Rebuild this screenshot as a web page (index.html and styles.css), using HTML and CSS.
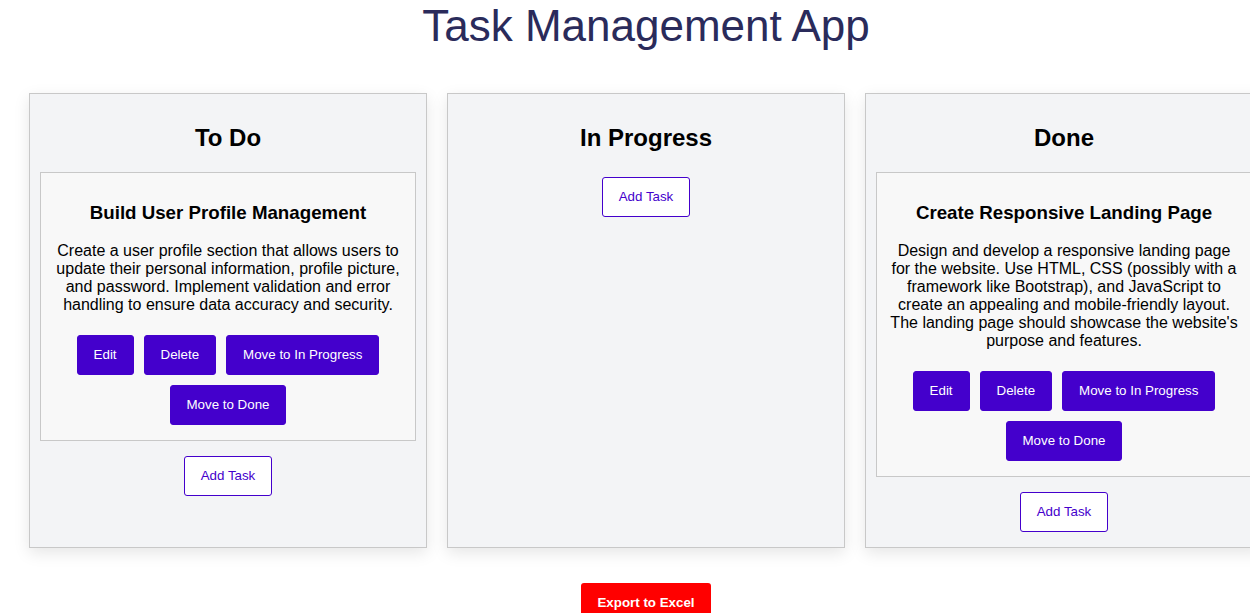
FILE: index.html
```html
<!DOCTYPE html>
<html lang="en">
<head>
<meta charset="utf-8">
<title>Task Management App</title>
<link rel="stylesheet" href="styles.css">
</head>
<body>
<div class="app">
  <h1 class="title">Task Management App</h1>
  <div class="board">
    <div class="column">
      <h2 class="column-title">To Do</h2>
      <div class="task">
        <h3 class="task-title">Build User Profile Management</h3>
        <p class="task-desc">Create a user profile section that allows users to update their personal information, profile picture, and password. Implement validation and error handling to ensure data accuracy and security.</p>
        <div class="actions">
          <button class="btn">Edit</button><button class="btn">Delete</button><button class="btn">Move to In Progress</button><button class="btn">Move to Done</button>
        </div>
      </div>
      <div class="add-row"><button class="btn btn-outline">Add Task</button></div>
    </div>
    <div class="column">
      <h2 class="column-title">In Progress</h2>
      <div class="add-row"><button class="btn btn-outline">Add Task</button></div>
    </div>
    <div class="column">
      <h2 class="column-title">Done</h2>
      <div class="task">
        <h3 class="task-title">Create Responsive Landing Page</h3>
        <p class="task-desc">Design and develop a responsive landing page for the website. Use HTML, CSS (possibly with a framework like Bootstrap), and JavaScript to create an appealing and mobile-friendly layout. The landing page should showcase the website's purpose and features.</p>
        <div class="actions">
          <button class="btn">Edit</button><button class="btn">Delete</button><button class="btn">Move to In Progress</button><button class="btn">Move to Done</button>
        </div>
      </div>
      <div class="add-row"><button class="btn btn-outline">Add Task</button></div>
    </div>
  </div>
  <div class="export-row"><button class="btn-export">Export to Excel</button></div>
</div>
</body>
</html>
```

FILE: styles.css
```css
html, body {
  margin: 0;
  padding: 0;
  background: #ffffff;
}

body {
  font-family: "Liberation Sans", Arial, sans-serif;
  color: #000;
}

.app {
  width: 1292px;
  box-sizing: border-box;
  padding: 0 29px;
  text-align: center;
}

.title {
  margin: 0;
  padding-top: 1px;
  font-size: 44px;
  font-weight: normal;
  line-height: 50px;
  color: #2a2b5b;
}

.board {
  display: grid;
  grid-template-columns: repeat(3, 398px);
  column-gap: 20px;
  margin-top: 42px;
}

.column {
  background: #f3f4f6;
  border: 1px solid #c8c8c8;
  padding: 10px;
  box-shadow: 0 5px 15px rgba(0, 0, 0, 0.1);
}

.column-title {
  font-size: 24px;
  font-weight: bold;
  margin: 20px 0;
  line-height: 28px;
}

.task {
  background: #f8f8f8;
  border: 1px solid #c8c8c8;
  padding: 10px;
  margin: 0 0 10px;
}

.task-title {
  font-size: 18.72px;
  font-weight: bold;
  margin: 18.72px 0;
  line-height: 21.5px;
}

.task-desc {
  font-size: 16px;
  line-height: 18px;
  margin: 16px 0;
}

.actions {
  display: flex;
  flex-wrap: wrap;
  justify-content: center;
}

.btn {
  font-family: "Liberation Sans", Arial, sans-serif;
  font-size: 13.333px;
  line-height: 16px;
  padding: 11px 16px;
  margin: 5px;
  border: 1px solid #4400cc;
  border-radius: 3px;
  background: #4400cc;
  color: #ffffff;
  cursor: pointer;
}

.btn-outline {
  background: #ffffff;
  color: #4400cc;
}

.add-row {
  display: flex;
  justify-content: center;
}

.export-row {
  display: flex;
  justify-content: center;
  margin-top: 35px;
}

.btn-export {
  font-family: "Liberation Sans", Arial, sans-serif;
  font-size: 13.333px;
  font-weight: bold;
  line-height: 16px;
  padding: 12px 16px;
  border: none;
  border-radius: 3px;
  background: #ff0000;
  color: #ffffff;
}
```
